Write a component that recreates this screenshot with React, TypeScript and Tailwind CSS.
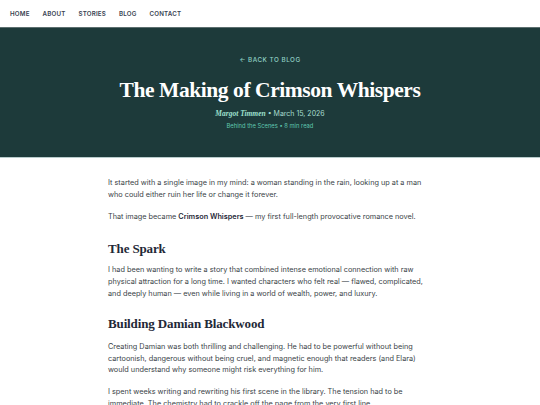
import React from "react";

export default function App() {
  const serif = "font-['Liberation_Serif',serif]";
  return (
    <div className="min-h-screen bg-white font-['Inter',sans-serif] text-[#3a3f47]">
      <nav className="h-[28px] flex items-center gap-[13px] px-[10px] border-b border-[#5c6f6f]">
        {["HOME", "ABOUT", "STORIES", "BLOG", "CONTACT"].map((n) => (
          <span key={n} className="text-[6.2px] font-semibold tracking-[0.03em] text-[#374151]">
            {n}
          </span>
        ))}
      </nav>
      <header className="bg-[#1d3a3a] h-[130px] flex flex-col items-center border-b border-[#b8cccc]">
        <div className="mt-[28px] text-[6.3px] tracking-[0.08em] font-medium text-[#8fd0c4]">← BACK TO BLOG</div>
        <h1 className={`${serif} mt-[11px] text-[21.5px] leading-[28px] font-bold text-white tracking-[-0.02em]`}>
          The Making of Crimson Whispers
        </h1>
        <div className="mt-[5px] text-[7px] leading-[10px] text-[#a7dccf]">
          <span className={`${serif} italic font-bold text-[7.5px] text-[#9fe0cf]`}>Margot Timmen</span> • March 15, 2026
        </div>
        <div className="mt-[3px] text-[5.8px] leading-[8px] text-[#5fc7ae]">Behind the Scenes • 8 min read</div>
      </header>
      <main className="w-[324px] mx-auto pt-[19px] text-[7.3px] leading-[11.8px]">
        <p>
          It started with a single image in my mind: a woman standing in the rain, looking up at a man who could either ruin her life or change it forever.
        </p>
        <p className="mt-[10px]">
          That image became <strong className="font-semibold text-[#1f2937]">Crimson Whispers</strong> — my first full-length provocative romance novel.
        </p>
        <h2 className={`${serif} mt-[18px] text-[13px] leading-[18px] font-bold text-[#1f2937] tracking-[-0.01em]`}>The Spark</h2>
        <p className="mt-[6px]">
          I had been wanting to write a story that combined intense emotional connection with raw physical attraction for a long time. I wanted characters who felt real — flawed, complicated, and deeply human — even while living in a world of wealth, power, and luxury.
        </p>
        <h2 className={`${serif} mt-[15px] text-[13px] leading-[18px] font-bold text-[#1f2937] tracking-[-0.01em]`}>Building Damian Blackwood</h2>
        <p className="mt-[8px]">
          Creating Damian was both thrilling and challenging. He had to be powerful without being cartoonish, dangerous without being cruel, and magnetic enough that readers (and Elara) would understand why someone might risk everything for him.
        </p>
        <p className="mt-[10px]">
          I spent weeks writing and rewriting his first scene in the library. The tension had to be immediate. The chemistry had to crackle off the page from the very first line.
        </p>
      </main>
    </div>
  );
}
